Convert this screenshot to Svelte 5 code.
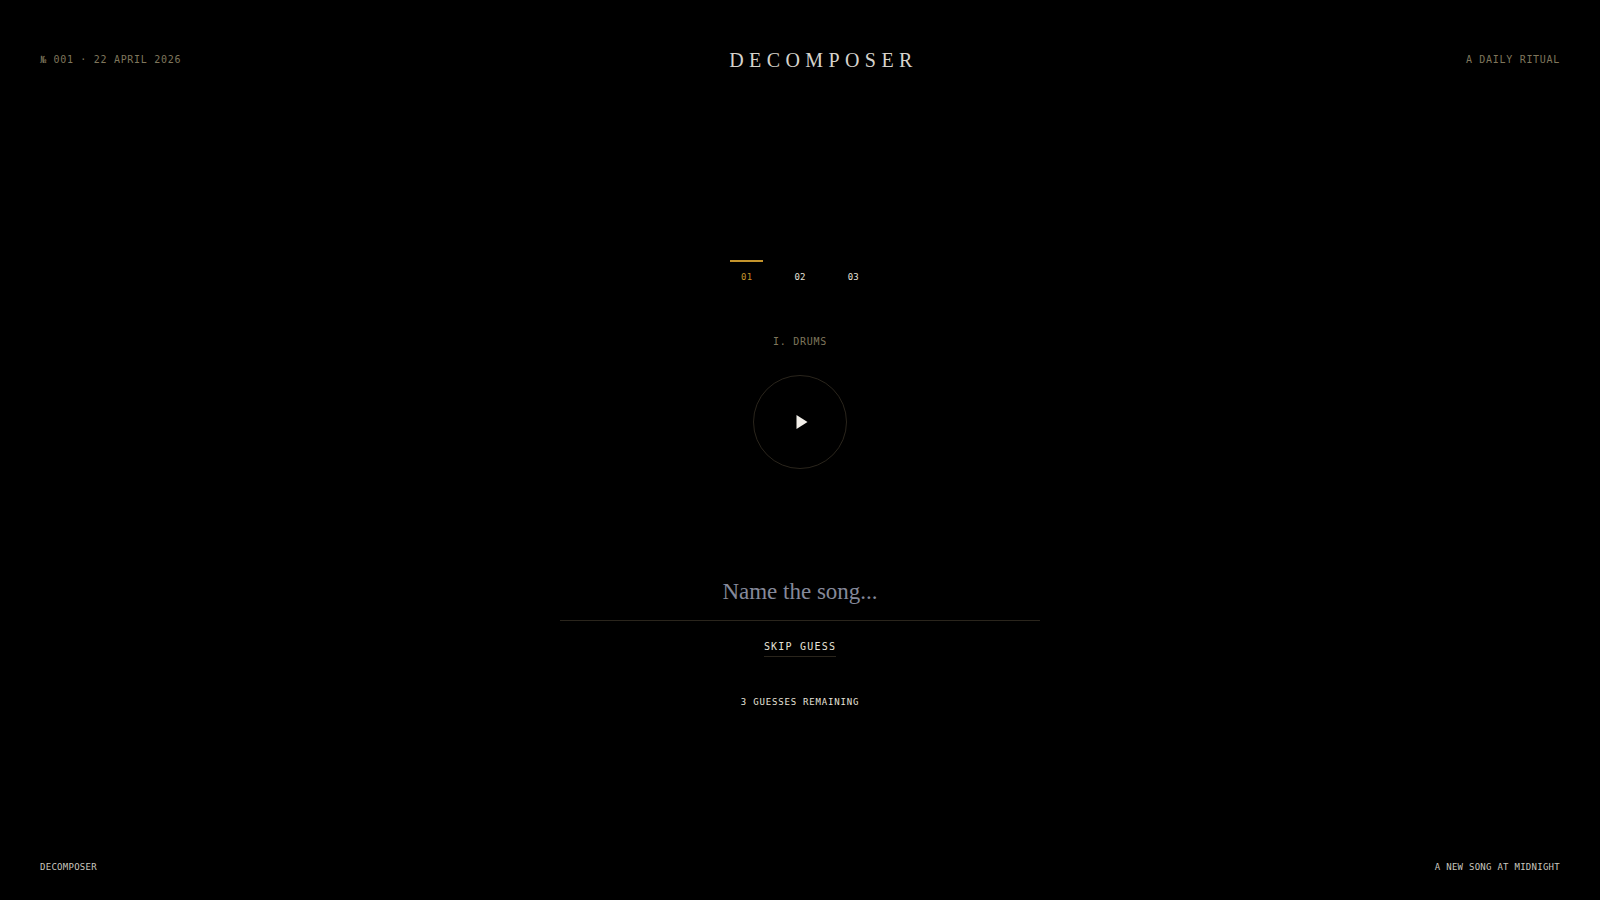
<script lang="ts">
	const stems = ['Drums', 'Bass', 'Vocals']
	const numerals = ['I', 'II', 'III']

	let current = $state(0)
	let guess = $state('')
	let remaining = $state(3)

	function skip() {
		if (remaining > 1) {
			remaining -= 1
			current += 1
		}
	}
</script>

<div class="page">
	<header>
		<span class="meta">№ 001 · 22 April 2026</span>
		<h1>Decomposer</h1>
		<span class="meta">A daily ritual</span>
	</header>

	<main>
		<nav class="tabs" aria-label="Stems">
			{#each stems as stem, i}
				<button class="tab" class:active={i === current} aria-label={stem} onclick={() => (current = i)}>
					0{i + 1}
				</button>
			{/each}
		</nav>

		<p class="stem">{numerals[current]}. {stems[current]}</p>

		<button class="play" aria-label="Play">
			<svg width="12" height="14" viewBox="0 0 12 14">
				<path d="M0.5 0 L11.5 7 L0.5 14 Z" fill="currentColor" />
			</svg>
		</button>

		<input class="guess" type="text" placeholder="Name the song..." aria-label="Name the song" bind:value={guess} />
		<button class="skip" onclick={skip}>Skip guess</button>
		<p class="remaining">{remaining} guesses remaining</p>
	</main>

	<footer>
		<span>Decomposer</span>
		<span>A new song at midnight</span>
	</footer>
</div>

<style>
	:global(body) {
		margin: 0;
		background: #000;
	}
	.page {
		--cream: #e6e2d9;
		--muted: #7f765c;
		--gold: #c4942c;
		--line: #2a251c;
		--mono: 'DejaVu Sans Mono', 'Liberation Mono', monospace;
		--serif: 'Liberation Serif', serif;
		display: flex;
		flex-direction: column;
		min-height: 100vh;
		background: #000;
		color: var(--cream);
		font-family: var(--mono);
		text-transform: uppercase;
	}
	button,
	input {
		padding: 0;
		border: none;
		background: none;
		color: inherit;
		font-family: inherit;
		text-transform: inherit;
	}
	button {
		cursor: pointer;
	}
	p,
	h1 {
		margin: 0;
		font-weight: normal;
	}
	header {
		display: flex;
		align-items: center;
		justify-content: space-between;
		padding: 40px;
	}
	.meta {
		color: var(--muted);
		font-size: 10px;
		line-height: 16px;
		letter-spacing: 0.07em;
	}
	h1 {
		color: #d6d3cc;
		font-family: var(--serif);
		font-size: 20px;
		line-height: 40px;
		letter-spacing: 0.27em;
	}
	main {
		display: flex;
		flex: 1;
		flex-direction: column;
		align-items: center;
		justify-content: center;
	}
	.tabs {
		display: grid;
		grid-template-columns: repeat(3, 1fr);
		gap: 20px;
		width: 140px;
	}
	.tab {
		padding-top: 7px;
		border-top: 2px solid transparent;
		font-size: 9px;
		line-height: 16px;
		letter-spacing: 0.02em;
	}
	.tab.active {
		border-color: var(--gold);
		color: var(--gold);
	}
	.stem {
		margin-top: 49px;
		color: var(--muted);
		font-size: 10px;
		line-height: 16px;
		letter-spacing: 0.07em;
	}
	.play {
		display: flex;
		align-items: center;
		justify-content: center;
		box-sizing: border-box;
		width: 94px;
		height: 94px;
		margin-top: 25px;
		padding-left: 4px;
		border: 1px solid var(--line);
		border-radius: 50%;
		color: #f2efe9;
	}
	.guess {
		box-sizing: border-box;
		width: 480px;
		max-width: 90%;
		height: 52px;
		margin-top: 100px;
		padding-bottom: 6px;
		border-bottom: 1px solid var(--line);
		outline: none;
		font-family: var(--serif);
		font-size: 23px;
		text-align: center;
		text-transform: none;
	}
	.guess::placeholder {
		color: #85899a;
		opacity: 1;
	}
	.skip {
		margin-top: 16px;
		border-bottom: 1px solid var(--line);
		font-size: 10px;
		line-height: 19px;
		letter-spacing: 0.12em;
	}
	.remaining {
		margin-top: 37px;
		font-size: 9px;
		line-height: 16px;
		letter-spacing: 0.09em;
	}
	footer {
		display: flex;
		justify-content: space-between;
		padding: 8px 40px 24px;
		color: #c9c6bf;
		font-size: 9px;
		line-height: 18px;
		letter-spacing: 0.03em;
	}
</style>
